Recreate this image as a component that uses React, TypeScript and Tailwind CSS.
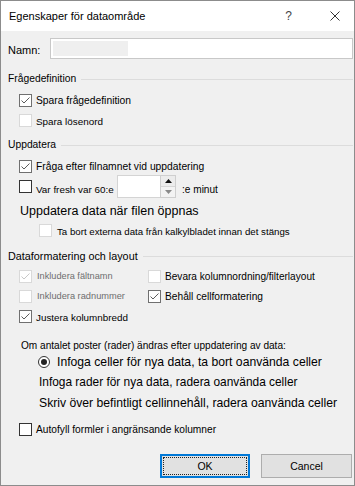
import React from "react";

function Check({ checked = false, tone = "dark" }: { checked?: boolean; tone?: "dark" | "mid" | "light" }) {
  const border =
    tone === "dark" ? "border-[#333333]" : tone === "mid" ? "border-[#707070]" : "border-[#d9d9d9]";
  const stroke = tone === "light" ? "#c8c8c8" : "#5c5c5c";
  return (
    <div className={`w-[13px] h-[13px] shrink-0 border ${border} bg-white flex items-center justify-center`}>
      {checked && (
        <svg width="11" height="11" viewBox="0 0 11 11">
          <path d="M1.5 5.5 L4 8 L9.5 2.5" fill="none" stroke={stroke} strokeWidth="1" />
        </svg>
      )}
    </div>
  );
}

function GroupHead({ label, size }: { label: string; size: string }) {
  return (
    <div className="flex items-center h-[14px] pl-[7px] pr-[1px]">
      <span className={`${size} leading-none whitespace-nowrap`}>{label}</span>
      <div className="flex-1 ml-[5px] border-t border-[#dcdcdc]" />
    </div>
  );
}

export default function App() {
  return (
    <div className="w-[355px] h-[486px] border border-[#8c8c8c] bg-[#f0f0f0] flex flex-col text-black font-['Liberation_Sans',Arial,sans-serif] overflow-hidden">
      {/* Title bar */}
      <div className="h-[30px] shrink-0 bg-white flex items-center pl-[8px]">
        <span className="text-[11px] leading-none">Egenskaper för dataområde</span>
        <span className="ml-auto text-[12px] leading-none text-[#444]">?</span>
        <svg className="ml-[38px] mr-[14px]" width="10" height="10" viewBox="0 0 10 10">
          <path d="M0.5 0.5 L9.5 9.5 M9.5 0.5 L0.5 9.5" stroke="#333" strokeWidth="1" fill="none" />
        </svg>
      </div>

      {/* Namn */}
      <div className="mt-[7px] h-[21px] flex items-center pl-[7px] pr-[1px]">
        <span className="w-[42px] text-[11px] leading-none pt-[3px]">Namn:</span>
        <div className="flex-1 h-[21px] bg-white border border-[#c8c8c8] flex items-center">
          <div className="ml-[2px] w-[75px] h-[15px] bg-[#efefef]" />
        </div>
      </div>

      {/* Frågedefinition */}
      <div className="mt-[13px]">
        <GroupHead label="Frågedefinition" size="text-[10.3px]" />
      </div>
      <div className="mt-[4px] h-[20px] flex items-center pl-[18px] gap-[4px]">
        <Check checked tone="mid" />
        <span className="text-[10.3px] leading-none pt-[2px]">Spara frågedefinition</span>
      </div>
      <div className="h-[20px] flex items-center pl-[18px] gap-[4px]">
        <Check tone="light" />
        <span className="text-[9.9px] leading-none pt-[3px]">Spara lösenord</span>
      </div>

      {/* Uppdatera */}
      <div className="mt-[8px]">
        <GroupHead label="Uppdatera" size="text-[10.3px]" />
      </div>
      <div className="mt-[5px] h-[18px] flex items-center pl-[18px] gap-[4px]">
        <Check checked tone="mid" />
        <span className="text-[10.3px] leading-none pt-[2px]">Fråga efter filnamnet vid uppdatering</span>
      </div>
      <div className="h-[23px] flex items-center pl-[18px]">
        <Check tone="dark" />
        <span className="ml-[4px] text-[9.9px] leading-none pt-[7px] w-[79px] whitespace-nowrap">Var fresh var 60:e</span>
        <div className="ml-[2px] flex h-[23px]">
          <div className="w-[43px] bg-white border-t border-b border-l border-[#d4d4d4]" />
          <div className="w-[16px] flex flex-col border border-[#cfcfcf] bg-[#f3f3f3]">
            <div className="flex-1 flex items-center justify-center border-b border-[#d6d6d6] bg-[#ececec]">
              <svg width="7" height="4" viewBox="0 0 7 4">
                <path d="M0 4 L3.5 0 L7 4 Z" fill="#111" />
              </svg>
            </div>
            <div className="flex-1 flex items-center justify-center">
              <svg width="7" height="4" viewBox="0 0 7 4">
                <path d="M0 0 L3.5 4 L7 0 Z" fill="#8a8a8a" />
              </svg>
            </div>
          </div>
        </div>
        <span className="ml-[6px] text-[10.1px] leading-none pt-[7px]">:e minut</span>
      </div>
      <div className="mt-[3px] h-[20px] flex items-center pl-[19px]">
        <span className="text-[12.5px] leading-none">Uppdatera data när filen öppnas</span>
      </div>
      <div className="h-[18px] flex items-center pl-[38px] gap-[5px]">
        <Check tone="light" />
        <span className="text-[9.7px] leading-none pt-[3px]">Ta bort externa data från kalkylbladet innan det stängs</span>
      </div>

      {/* Dataformatering och layout */}
      <div className="mt-[10px]">
        <GroupHead label="Dataformatering och layout" size="text-[10.8px]" />
      </div>
      <div className="mt-[3px] grid grid-cols-[129px_1fr] auto-rows-[20px] pl-[18px]">
        <div className="flex items-center gap-[5px]">
          <Check checked tone="light" />
          <span className="text-[9.2px] leading-none pt-[2px] text-[#6e6e6e]">Inkludera fältnamn</span>
        </div>
        <div className="flex items-center gap-[4px]">
          <Check tone="light" />
          <span className="text-[10.1px] leading-none pt-[2px]">Bevara kolumnordning/filterlayout</span>
        </div>
        <div className="flex items-center gap-[5px]">
          <Check tone="light" />
          <span className="text-[9.25px] leading-none pt-[2px] text-[#6e6e6e]">Inkludera radnummer</span>
        </div>
        <div className="flex items-center gap-[4px]">
          <Check checked tone="mid" />
          <span className="text-[10.2px] leading-none pt-[2px]">Behåll cellformatering</span>
        </div>
        <div className="flex items-center gap-[4px] col-span-2">
          <Check checked tone="mid" />
          <span className="text-[9.85px] leading-none pt-[3px]">Justera kolumnbredd</span>
        </div>
      </div>

      {/* Om antalet */}
      <div className="mt-[13px] h-[14px] flex items-center pl-[20px]">
        <span className="text-[10.1px] leading-none">Om antalet poster (rader) ändras efter uppdatering av data:</span>
      </div>
      <div className="h-[18px] flex items-center pl-[37px] gap-[7px]">
        <div className="w-[12px] h-[12px] rounded-full border border-[#333] bg-white flex items-center justify-center">
          <div className="w-[6px] h-[6px] rounded-full bg-[#222]" />
        </div>
        <span className="text-[12.2px] leading-none">Infoga celler för nya data, ta bort oanvända celler</span>
      </div>
      <div className="mt-[2px] h-[20px] flex items-center pl-[38px]">
        <span className="text-[11.9px] leading-none">Infoga rader för nya data, radera oanvända celler</span>
      </div>
      <div className="h-[20px] flex items-center pl-[38px]">
        <span className="text-[12.2px] leading-none">Skriv över befintligt cellinnehåll, radera oanvända celler</span>
      </div>

      {/* Autofyll */}
      <div className="mt-[7px] h-[18px] flex items-center pl-[18px] gap-[4px]">
        <Check tone="dark" />
        <span className="text-[10.2px] leading-none pt-[2px]">Autofyll formler i angränsande kolumner</span>
      </div>

      {/* Buttons */}
      <div className="mt-[16px] flex justify-end pr-[2px] gap-[11px]">
        <button className="w-[90px] h-[24px] bg-[#e1e1e1] border-2 border-[#0078d7] p-[1px] flex">
          <div className="flex-1 border border-dotted border-[#222] flex items-center justify-center text-[10.5px] leading-none">
            OK
          </div>
        </button>
        <button className="w-[91px] h-[24px] bg-[#e1e1e1] border border-[#adadad] flex items-center justify-center text-[10.5px] leading-none">
          Cancel
        </button>
      </div>
    </div>
  );
}
